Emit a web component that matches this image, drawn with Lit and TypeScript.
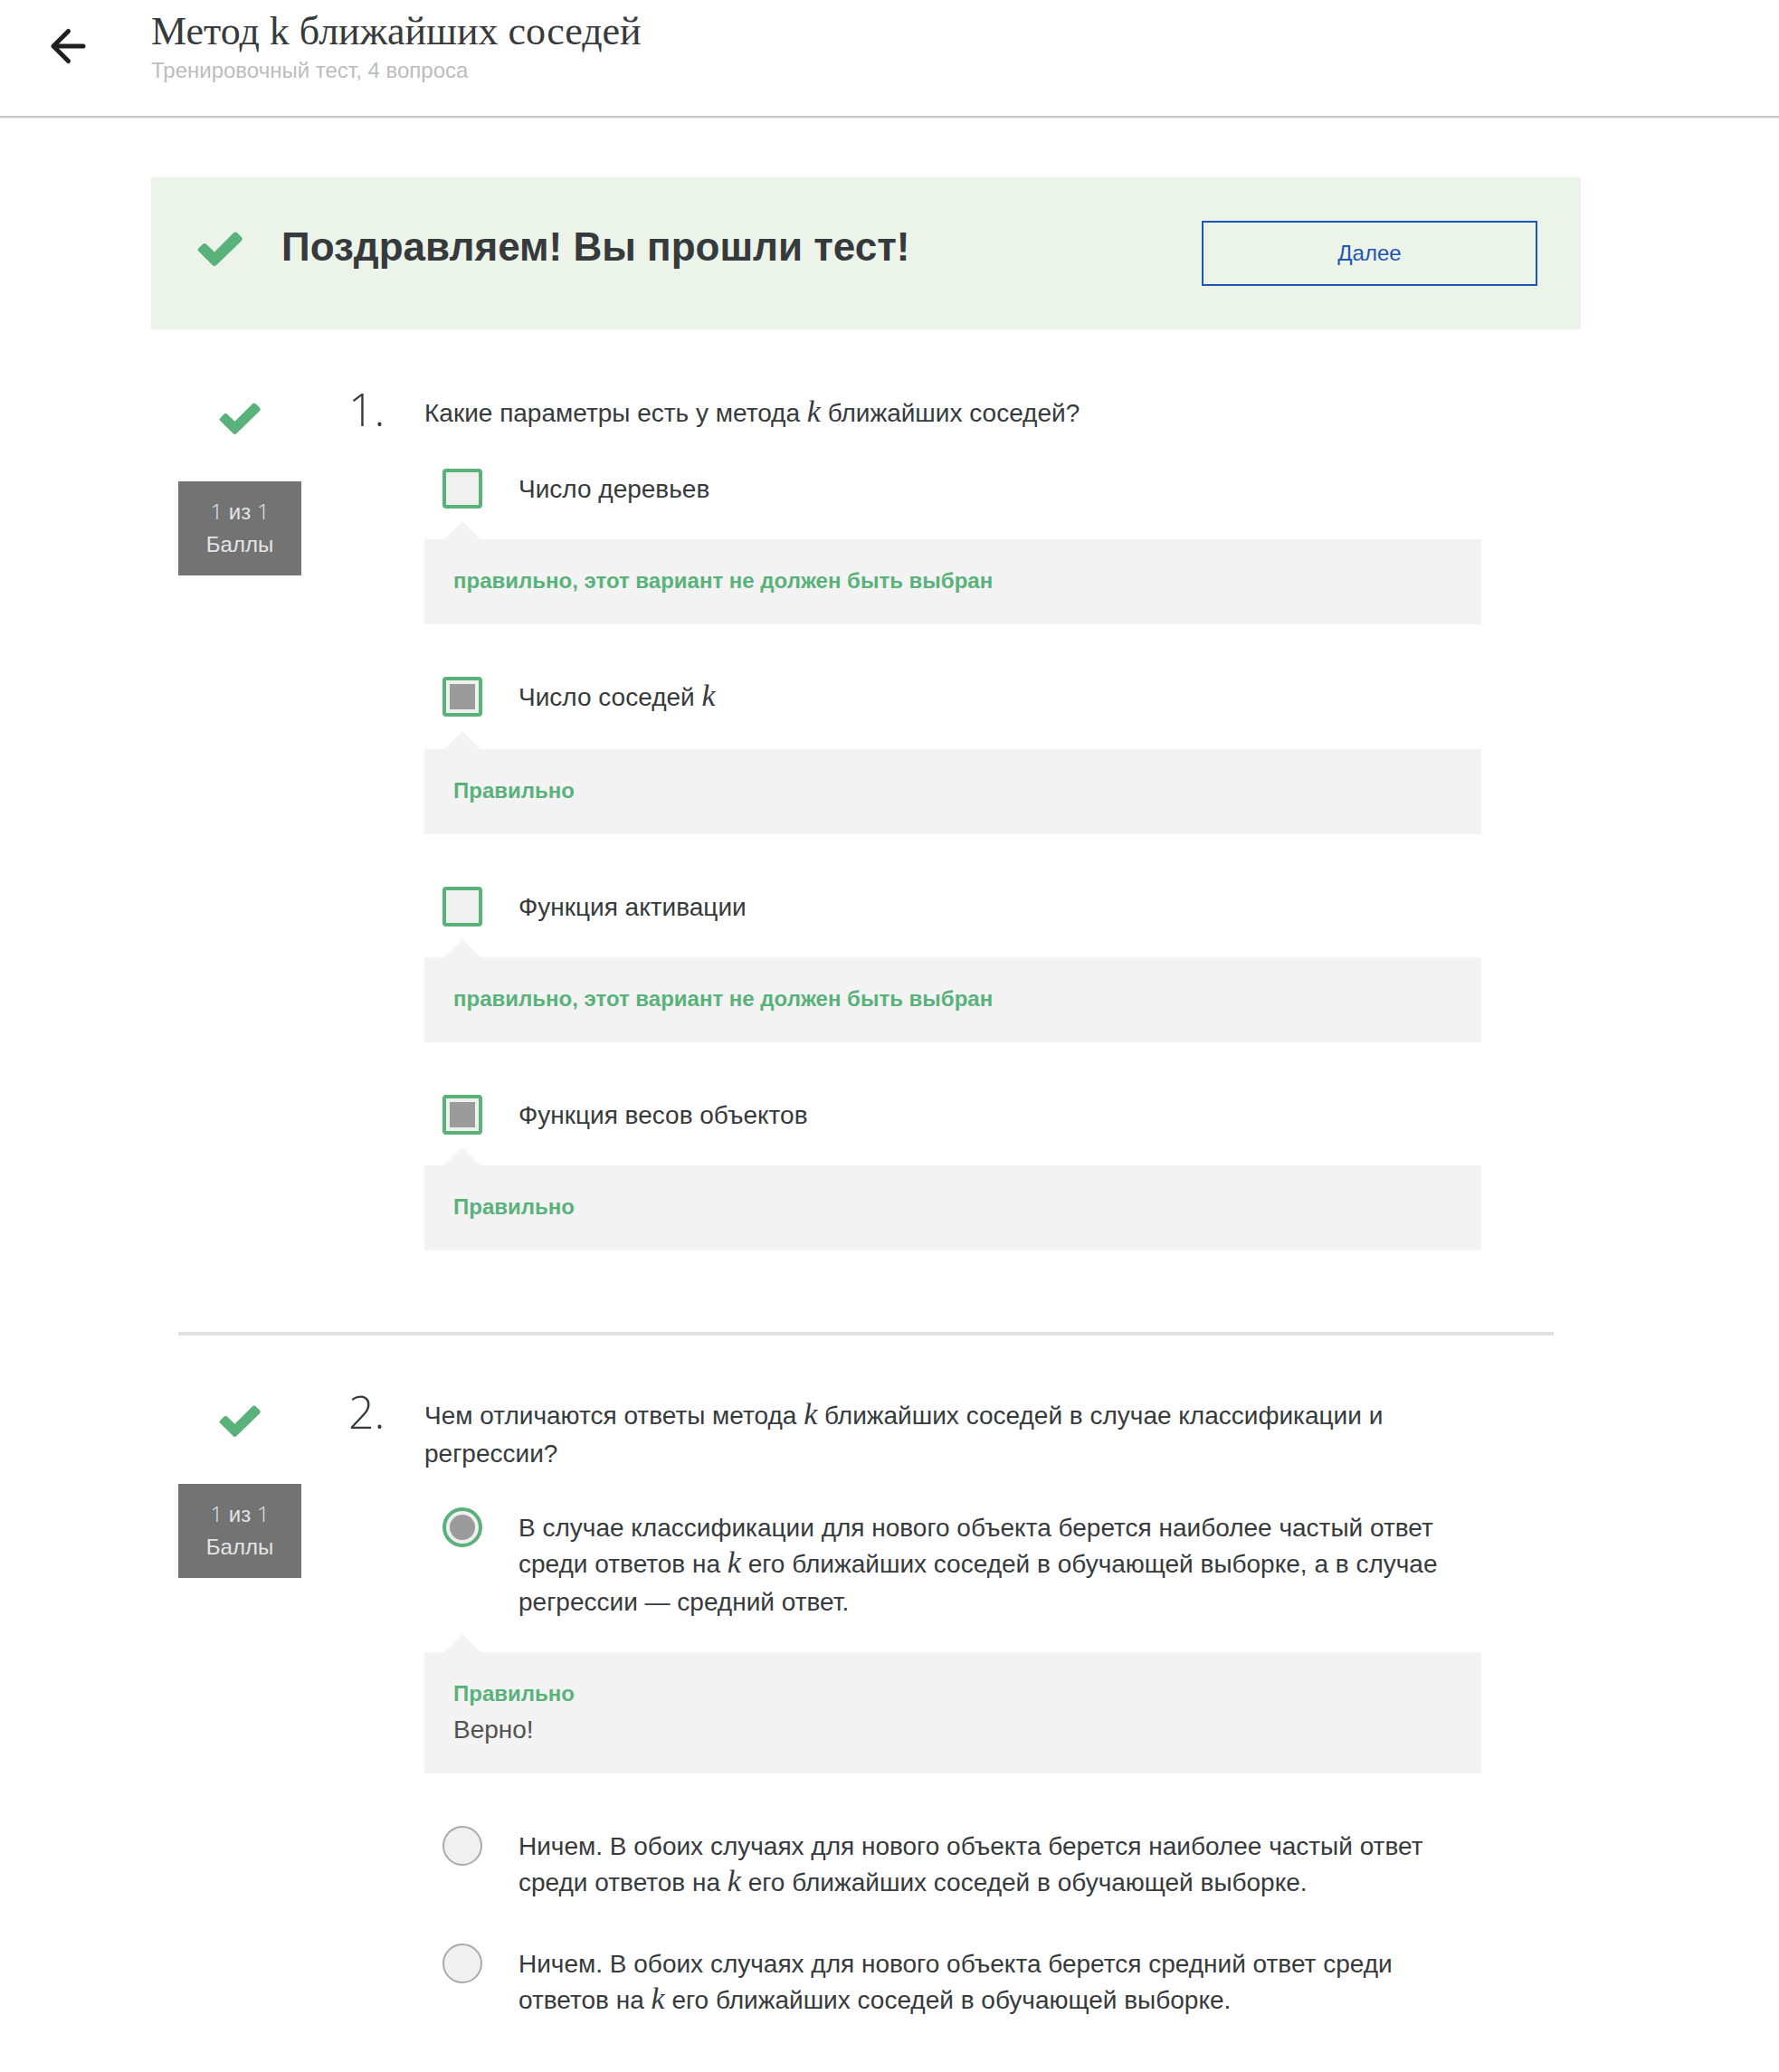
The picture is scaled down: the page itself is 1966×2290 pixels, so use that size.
import { LitElement, html, css, svg, nothing, TemplateResult } from "lit";
import { customElement, property } from "lit/decorators.js";

const SANS = css`"Liberation Sans", Arial, sans-serif`;

const k = html`<span class="math">k</span>`;

interface Option {
  text: TemplateResult;
  checked: boolean;
  verdict?: string;
  note?: string;
}

interface Question {
  kind: "checkbox" | "radio";
  prompt: TemplateResult;
  options: Option[];
}

const NOT_SELECTED = "правильно, этот вариант не должен быть выбран";

const questions: Question[] = [
  {
    kind: "checkbox",
    prompt: html`Какие параметры есть у метода ${k} ближайших соседей?`,
    options: [
      { text: html`Число деревьев`, checked: false, verdict: NOT_SELECTED },
      { text: html`Число соседей ${k}`, checked: true, verdict: "Правильно" },
      { text: html`Функция активации`, checked: false, verdict: NOT_SELECTED },
      { text: html`Функция весов объектов`, checked: true, verdict: "Правильно" },
    ],
  },
  {
    kind: "radio",
    prompt: html`Чем отличаются ответы метода ${k} ближайших соседей в случае классификации и регрессии?`,
    options: [
      {
        text: html`В случае классификации для нового объекта берется наиболее частый ответ среди ответов на ${k} его ближайших соседей в обучающей выборке, а в случае регрессии — средний ответ.`,
        checked: true,
        verdict: "Правильно",
        note: "Верно!",
      },
      {
        text: html`Ничем. В обоих случаях для нового объекта берется наиболее частый ответ среди ответов на ${k} его ближайших соседей в обучающей выборке.`,
        checked: false,
      },
      {
        text: html`Ничем. В обоих случаях для нового объекта берется средний ответ среди ответов на ${k} его ближайших соседей в обучающей выборке.`,
        checked: false,
      },
    ],
  },
];

const checkShape = svg`<path d="M1.2 18.600 5.600 14.200Q8 12 10.400 14.200L19 22.600 40 1.600Q42.200 -.4 44.400 1.600L48.600 5.800Q50.800 8 48.600 10.400L21.200 37Q19 39 16.800 37L1.200 21.400Q0 20 1.200 18.600Z" />`;

@customElement("quiz-question")
export class QuizQuestion extends LitElement {
  static styles = css`
    :host {
      display: grid;
      grid-template-columns: 136px 136px minmax(0, 1fr);
      padding: 68px 80px 76px 0;
      font: 28px/40px ${SANS};
      color: #373a3c;
    }
    .score {
      display: flex;
      flex-direction: column;
      align-items: center;
      gap: 52px;
      padding-top: 9px;
    }
    .check {
      width: 46px;
      height: 35px;
      fill: #5ab27b;
    }
    .points {
      box-sizing: border-box;
      width: 100%;
      padding: 16px 0;
      background: #737373;
      color: #e4e4e4;
      font: 24px/36px ${SANS};
      text-align: center;
    }
    .figure {
      font: 300 24px/24px "Open Sans", ${SANS};
    }
    .number {
      padding-left: 52px;
      font: 300 50px/32px "Open Sans", ${SANS};
    }
    .body {
      min-width: 0;
    }
    .prompt {
      margin: 0;
      padding: 1px 0 39px;
    }
    .math {
      display: inline-block;
      margin-bottom: 14px;
      font: italic 34px/20px "Liberation Serif", "Times New Roman", serif;
    }
    .options {
      display: flex;
      flex-direction: column;
      gap: 44px;
      margin: 0;
      padding: 0;
      list-style: none;
    }
    .option {
      display: flex;
      align-items: flex-start;
      gap: 40px;
      padding: 0 20px;
    }
    .text {
      flex: 1;
      padding: 3px 0 1px;
    }
    .mark {
      appearance: none;
      box-sizing: border-box;
      flex: none;
      width: 44px;
      height: 44px;
      margin: 0;
      border: 2px solid #aaa;
      border-radius: 4px;
      background: #f0f0f0;
    }
    .mark[type="radio"] {
      border-radius: 50%;
    }
    .mark.right {
      border: 4px solid #5ab27b;
    }
    .mark:checked {
      padding: 4px;
    }
    .mark:checked::before {
      content: "";
      display: block;
      height: 100%;
      background: #9b9b9b;
    }
    .mark[type="radio"]:checked::before {
      border-radius: 50%;
    }
    .feedback {
      position: relative;
      margin: 34px 0 14px;
      padding: 26px 32px 28px;
      background: #f3f3f3;
    }
    .feedback::before {
      content: "";
      position: absolute;
      left: 22px;
      bottom: 100%;
      width: 40px;
      height: 20px;
      background: #f3f3f3;
      clip-path: polygon(50% 0, 100% 100%, 0 100%);
    }
    .verdict {
      margin: 0;
      font-size: 24px;
      font-weight: 700;
      color: #5ab27b;
    }
    .note {
      margin: 0;
      color: #525252;
    }
  `;

  @property({ attribute: false }) question!: Question;
  @property({ type: Number }) index = 1;

  render() {
    const { kind, prompt, options } = this.question;
    return html`
      <div class="score">
        <svg class="check" viewBox="0 0 50 38" preserveAspectRatio="none" aria-hidden="true">${checkShape}</svg>
        <div class="points">
          <div><span class="figure">1</span> из <span class="figure">1</span></div>
          <div>Баллы</div>
        </div>
      </div>
      <div class="number">${this.index}.</div>
      <div class="body" role="group" aria-labelledby="prompt">
        <p class="prompt" id="prompt">${prompt}</p>
        <ul class="options">
          ${options.map(
            (o, i) => html`<li>
              <div class="option">
                <input
                  class="mark ${o.verdict ? "right" : ""}"
                  type=${kind}
                  id="option-${i}"
                  name="answer"
                  .checked=${o.checked}
                />
                <label class="text" for="option-${i}">${o.text}</label>
              </div>
              ${o.verdict
                ? html`<div class="feedback">
                    <p class="verdict">${o.verdict}</p>
                    ${o.note ? html`<p class="note">${o.note}</p>` : nothing}
                  </div>`
                : nothing}
            </li>`
          )}
        </ul>
      </div>
    `;
  }
}

@customElement("app-root")
export class AppRoot extends LitElement {
  static styles = css`
    :host {
      display: block;
      background: #fff;
      color: #373a3c;
      font: 28px/40px ${SANS};
    }
    .header {
      display: flex;
      box-sizing: border-box;
      min-height: 130px;
      border-bottom: 2px solid #c8c8c8;
      box-shadow: 0 1px 1px #ececec;
    }
    .back {
      width: 167px;
      height: 102px;
      padding: 0 0 0 54px;
      border: 0;
      background: none;
      text-align: left;
    }
    .arrow {
      display: block;
      width: 42px;
      height: 42px;
      fill: none;
      stroke: #1f1f1f;
      stroke-width: 5;
      stroke-linecap: round;
      stroke-linejoin: round;
    }
    .title {
      margin: 8px 0 0;
      font: 400 44px/54px "Liberation Serif", Georgia, serif;
    }
    .subtitle {
      margin: 0;
      font-size: 24px;
      line-height: 32px;
      color: #bdbdbd;
    }
    .main {
      padding: 66px 219px 0 167px;
    }
    .banner {
      display: flex;
      align-items: flex-start;
      margin-bottom: 4px;
      padding: 48px;
      background: #ecf4e9;
    }
    .passed {
      width: 50px;
      height: 38px;
      margin: 12px 43px 0 3px;
      fill: #5ab27b;
    }
    .congrats {
      flex: 1;
      margin: 0;
      font-size: 44px;
      line-height: 58px;
      font-weight: 700;
    }
    .next {
      box-sizing: border-box;
      width: 371px;
      height: 72px;
      border: 2px solid #1f57b5;
      background: none;
      color: #1f57b5;
      font: 24px/36px ${SANS};
    }
    .questions {
      padding: 0 30px;
    }
    .entry + .entry {
      border-top: 4px solid #e1e1e1;
    }
  `;

  render() {
    return html`
      <header class="header">
        <button class="back" type="button" aria-label="Назад">
          <svg class="arrow" viewBox="0 0 42 42" aria-hidden="true">
            <path d="M21.500 4.500 5 21l16.500 16.500M5 21h33" />
          </svg>
        </button>
        <div>
          <h1 class="title">Метод k ближайших соседей</h1>
          <p class="subtitle">Тренировочный тест, 4 вопроса</p>
        </div>
      </header>
      <main class="main">
        <section class="banner">
          <svg class="passed" viewBox="0 0 50 38" aria-hidden="true">${checkShape}</svg>
          <h2 class="congrats">Поздравляем! Вы прошли тест!</h2>
          <button class="next" type="button">Далее</button>
        </section>
        <div class="questions">
          ${questions.map(
            (q, i) => html`<div class="entry"><quiz-question .question=${q} .index=${i + 1}></quiz-question></div>`
          )}
        </div>
      </main>
    `;
  }
}
